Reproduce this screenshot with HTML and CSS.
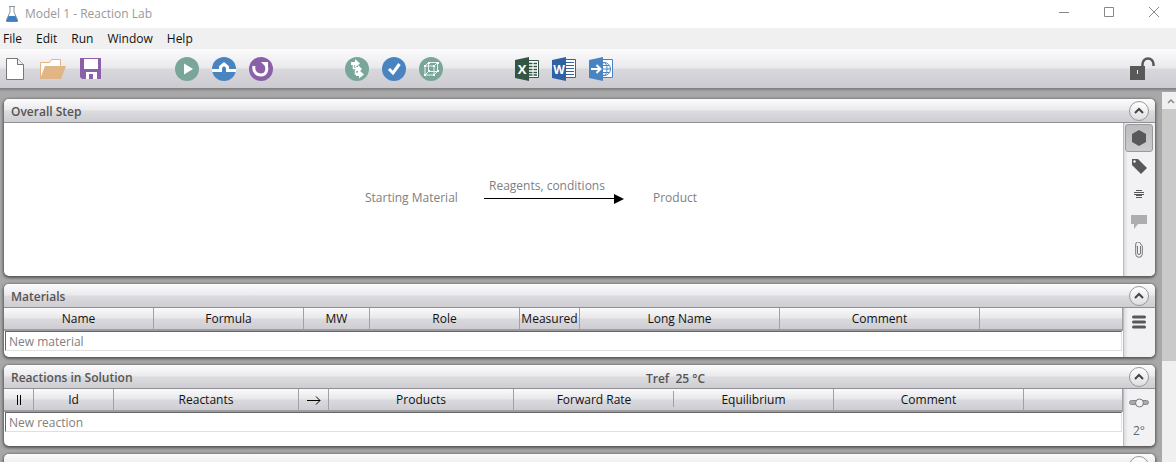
FILE: index.html
```
<!DOCTYPE html>
<html lang="en">
<head>
    <meta charset="UTF-8">
    <meta name="viewport" content="width=device-width, initial-scale=1.0">
    <title>Model 1 - Reaction Lab</title>
    <link rel="stylesheet" href="styles.css">
</head>
<body>

    <!-- Title bar -->
    <header class="title-bar">
        <svg class="app-icon" width="14" height="18" viewBox="0 0 14 18">
            <path d="M4 1.500h6M5 2v5L1.500 15v1.500h11V15L9 7V2" fill="#fff" stroke="#8b98a5"/>
            <path d="M3.500 11h7l2 4v1.500h-11V15z" fill="#3f7fc1"/>
        </svg>
        <h1>Model 1 - Reaction Lab</h1>
        <div class="window-buttons">
            <button aria-label="Minimize"><svg width="12" height="12" viewBox="0 0 12 12"><path d="M1 6.500h10"/></svg></button>
            <button aria-label="Maximize"><svg width="12" height="12" viewBox="0 0 12 12"><path d="M1.500 1.500h9v9h-9z"/></svg></button>
            <button aria-label="Close"><svg width="12" height="12" viewBox="0 0 12 12"><path d="M1 1l10 10M11 1L1 11"/></svg></button>
        </div>
    </header>

    <!-- Menu -->
    <nav class="menu">
        <button>File</button>
        <button>Edit</button>
        <button>Run</button>
        <button>Window</button>
        <button>Help</button>
    </nav>

    <!-- Toolbar -->
    <div class="toolbar">
        <div class="tool-group files">
            <button aria-label="New">
                <svg width="20" height="24" viewBox="0 0 20 24"><path d="M1.500 1.500h11l6 6v15h-17z" fill="#fff" stroke="#777"/><path d="M12.500 1.500v6h6" fill="#eee" stroke="#777"/></svg>
            </button>
            <button aria-label="Open">
                <svg width="28" height="22" viewBox="0 0 28 22"><path d="M1.500 20V4.500h9l2-3h9v6" fill="#fff" stroke="#e2b684"/><path d="M1 21L6 8h21l-5 13z" fill="#e2b684"/></svg>
            </button>
            <button aria-label="Save">
                <svg width="22" height="22" viewBox="0 0 22 22"><path d="M1 0h20v21H2l-2-2V0z" fill="#8a60a9"/><path d="M4 1h14v10H4zM6 14h11v7H6z" fill="#fff"/><path d="M9 16h4v5H9z" fill="#8a60a9"/></svg>
            </button>
        </div>
        <div class="tool-group">
            <button aria-label="Run">
                <svg width="24" height="24" viewBox="0 0 24 24"><circle cx="12" cy="12" r="12" fill="#7aa69a"/><path d="M9 6.500v11l9-5.500z" fill="#fff"/></svg>
            </button>
            <button aria-label="Bypass">
                <svg width="24" height="24" viewBox="0 0 24 24"><circle cx="12" cy="12" r="12" fill="#4a84c0"/><path d="M0 13.500h8.500V10L12 7l3.500 3v3.500H24" fill="none" stroke="#fff" stroke-width="3"/></svg>
            </button>
            <button aria-label="Repeat">
                <svg width="24" height="24" viewBox="0 0 24 24"><circle cx="12" cy="12" r="12" fill="#8a60a9"/><path d="M5 9c-1 5 2 9 7 9 5 0 7-5 5-10" fill="none" stroke="#fff" stroke-width="3"/><path d="M12 5h7v7z" fill="#fff"/></svg>
            </button>
        </div>
        <div class="tool-group">
            <button aria-label="Reactions">
                <svg width="24" height="24" viewBox="0 0 24 24"><circle cx="12" cy="12" r="12" fill="#7aa69a"/><path d="M6 5h4V2l5 4.500-5 4V8H6zM11 10h2V8l4 4-4 4v-2h-3zM14 15V13l5 4.500-5 4V19h-3v-3z" fill="#fff"/><path d="M8.500 8v3.500h3M10.500 13v4h4" fill="none" stroke="#fff" stroke-width="1.500"/></svg>
            </button>
            <button aria-label="Verify">
                <svg width="24" height="24" viewBox="0 0 24 24"><circle cx="12" cy="12" r="12" fill="#4a84c0"/><path d="M7 12l4 4 6.500-9" fill="none" stroke="#fff" stroke-width="3"/></svg>
            </button>
            <button aria-label="Design space">
                <svg width="24" height="24" viewBox="0 0 24 24"><circle cx="12" cy="12" r="12" fill="#7aa69a"/><path d="M6 9h9v9H6zM9.500 5.500h9v9h-9zM6 9l3.500-3.500M15 9l3.500-3.500M15 18l3.500-3.500M6 18l3.500-3.500" fill="none" stroke="#e8f1ee"/><path d="M5 8h2v2H5zM14 8h2v2h-2zM5 17h2v2H5zM14 17h2v2h-2zM9 5h2v2H9zM18 5h2v2h-2zM18 13h2v2h-2zM9 13h2v2H9z" fill="#fff"/></svg>
            </button>
        </div>
        <div class="tool-group">
            <button aria-label="Export to Excel">
                <svg width="24" height="24" viewBox="0 0 24 24"><path d="M13 3.500h10.500v17H13z" fill="#fff" stroke="#335544"/><path d="M14 6.500h8M14 9.500h8M14 12.500h8M14 15.500h8M14 18h8" stroke="#335544" stroke-width="1.500"/><path d="M18 5v14" stroke="#fff"/><path d="M0 3l14-3v24L0 21z" fill="#335544"/><text x="7" y="17" class="app-letter">X</text></svg>
            </button>
            <button aria-label="Export to Word">
                <svg width="24" height="24" viewBox="0 0 24 24"><path d="M13 2.500h10.500v18H13z" fill="#fff" stroke="#3260a5"/><path d="M14 5.500h8M14 8.500h8M14 11.500h8M14 14.500h8M14 17.500h8" stroke="#3260a5"/><path d="M0 3l14-3v24L0 21z" fill="#3260a5"/><text x="7" y="17" class="app-letter word">W</text></svg>
            </button>
            <button aria-label="Export to web">
                <svg width="24" height="24" viewBox="0 0 24 24"><path d="M13 2.500h10.500v18H13z" fill="#fff" stroke="#4a84c0"/><g fill="none" stroke="#4a84c0"><circle cx="15" cy="12" r="6.500"/><ellipse cx="15" cy="12" rx="3" ry="6.500"/><path d="M14 12h8M14 8.500h6M14 15.500h6"/></g><path d="M0 3l14-3v24L0 21z" fill="#4a84c0"/><path d="M2 12h9M7.500 8l4 4-4 4" fill="none" stroke="#fff" stroke-width="2"/></svg>
            </button>
        </div>
        <button class="lock" aria-label="Unlocked">
            <svg width="26" height="24" viewBox="0 0 26 24"><path d="M1 9h15v14H1z" fill="#585858"/><path d="M8.500 13v4" stroke="#eee"/><path d="M13.500 9V7a5.500 5.500 0 0 1 11 0v2" fill="none" stroke="#585858" stroke-width="2.500"/></svg>
        </button>
    </div>

    <div class="workspace">
        <main class="panels">

            <!-- Overall step -->
            <section class="panel">
                <div class="panel-header">
                    <h2>Overall Step</h2>
                    <button class="collapse" aria-label="Collapse Overall Step"><svg width="10" height="8" viewBox="0 0 10 8"><path d="M1 6l4-4 4 4"/></svg></button>
                </div>
                <div class="panel-body step-body">
                    <div class="panel-main scheme">
                        <span class="scheme-start">Starting Material</span>
                        <span class="scheme-arrow">
                            Reagents, conditions
                            <svg width="140" height="10" viewBox="0 0 140 10"><path d="M0 4.500h132" stroke="#000"/><path d="M130 0l10 5-10 5z"/></svg>
                        </span>
                        <span class="scheme-end">Product</span>
                    </div>
                    <div class="side">
                        <button class="selected" aria-label="Structure"><svg width="16" height="16" viewBox="0 0 16 16"><path d="M8 0l7 4v8l-7 4-7-4V4z" fill="#585858"/></svg></button>
                        <button aria-label="Label"><svg width="16" height="16" viewBox="0 0 16 16"><path d="M1 1h6l9 9-6 6-9-9z" fill="#585858"/><circle cx="3.500" cy="3.500" r="1.200" fill="#fff"/></svg></button>
                        <button aria-label="Text"><svg width="12" height="8" viewBox="0 0 12 8"><path d="M3 .5h6M1 2.500h10M3 5.500h6M1 4.500h10M3 7.500h6" stroke="#585858"/></svg></button>
                        <button aria-label="Comment"><svg width="16" height="14" viewBox="0 0 16 14"><path d="M0 0h16v9H7l-4 5V9H0z" fill="#adadad"/></svg></button>
                        <button aria-label="Attachment"><svg width="8" height="16" viewBox="0 0 8 16"><path d="M5.500 4v7a1.500 1.500 0 0 1-3 0V4M.7 5V3a2.500 2.500 0 0 1 5-1L7.300 4v8a3 3 0 0 1-6.600 0V4" fill="none" stroke="#777"/></svg></button>
                    </div>
                </div>
            </section>

            <!-- Materials -->
            <section class="panel">
                <div class="panel-header">
                    <h2>Materials</h2>
                    <button class="collapse" aria-label="Collapse Materials"><svg width="10" height="8" viewBox="0 0 10 8"><path d="M1 6l4-4 4 4"/></svg></button>
                </div>
                <div class="panel-body">
                    <div class="panel-main">
                        <table class="materials">
                            <thead>
                                <tr>
                                    <th class="name">Name</th>
                                    <th class="name">Formula</th>
                                    <th class="mw">MW</th>
                                    <th class="name">Role</th>
                                    <th class="measured">Measured</th>
                                    <th class="long">Long Name</th>
                                    <th class="long">Comment</th>
                                    <th></th>
                                </tr>
                            </thead>
                            <tbody>
                                <tr><td colspan="8"><input type="text" placeholder="New material" aria-label="New material"></td></tr>
                            </tbody>
                        </table>
                    </div>
                    <div class="side">
                        <button aria-label="Materials menu"><svg width="14" height="14" viewBox="0 0 14 14"><path d="M1.500 2h11M1.500 7h11M1.500 12h11" stroke="#585858" stroke-width="3" stroke-linecap="round"/></svg></button>
                    </div>
                </div>
            </section>

            <!-- Reactions -->
            <section class="panel">
                <div class="panel-header">
                    <h2>Reactions in Solution</h2>
                    <span class="tref">Tref&nbsp; 25 °C</span>
                    <button class="collapse" aria-label="Collapse Reactions in Solution"><svg width="10" height="8" viewBox="0 0 10 8"><path d="M1 6l4-4 4 4"/></svg></button>
                </div>
                <div class="panel-body reactions-body">
                    <div class="panel-main">
                        <table class="reactions">
                            <thead>
                                <tr>
                                    <th class="pause"><svg width="6" height="10" viewBox="0 0 6 10"><path d="M1.500 0v10M4.500 0v10" stroke="#000"/></svg></th>
                                    <th class="id">Id</th>
                                    <th class="side-name">Reactants</th>
                                    <th class="arrow"><svg width="14" height="10" viewBox="0 0 14 10"><path d="M0 5.500h13M9 1.500l4 4-4 4" fill="none" stroke="#000"/></svg></th>
                                    <th class="side-name">Products</th>
                                    <th class="rate split">Forward Rate</th>
                                    <th class="rate">Equilibrium</th>
                                    <th class="comment">Comment</th>
                                    <th></th>
                                </tr>
                            </thead>
                            <tbody>
                                <tr><td colspan="9"><input type="text" placeholder="New reaction" aria-label="New reaction"></td></tr>
                            </tbody>
                        </table>
                    </div>
                    <div class="side">
                        <button aria-label="Slider"><svg width="20" height="10" viewBox="0 0 20 10"><rect x=".5" y="2.500" width="19" height="4" rx="2" fill="#aaa" stroke="#888"/><circle cx="10.500" cy="5" r="4" fill="#f2f2f4" stroke="#777"/></svg></button>
                        <button>2°</button>
                    </div>
                </div>
            </section>

            <!-- Next panel, cut by the window -->
            <section class="panel">
                <div class="panel-header">
                    <button class="collapse" aria-label="Collapse"><svg width="10" height="8" viewBox="0 0 10 8"><path d="M1 6l4-4 4 4"/></svg></button>
                </div>
            </section>
        </main>

        <div class="scrollbar">
            <button aria-label="Scroll up"><svg width="8" height="6" viewBox="0 0 8 6"><path d="M1 5l3-3 3 3" fill="none" stroke="#888" stroke-width="1.500"/></svg></button>
            <div class="thumb"></div>
        </div>
    </div>

</body>
</html>
```

FILE: styles.css
```
* {
    margin: 0;
    padding: 0;
    box-sizing: border-box;
}

body {
    height: 100vh;
    display: flex;
    flex-direction: column;
    overflow: hidden;
    background: #a8a8a8;
    font-family: "Open Sans", "Noto Sans", sans-serif;
    font-size: 12px;
    line-height: 16px;
    color: #111;
}

button {
    display: flex;
    align-items: center;
    justify-content: center;
    background: none;
    border: none;
    font: inherit;
    color: inherit;
}

svg {
    display: block;
    flex: none;
}

/* Title bar */
.title-bar {
    flex: none;
    height: 28px;
    padding: 0 5px;
    display: flex;
    align-items: center;
    background: #fff;
}

.title-bar h1 {
    margin-left: 6px;
    font-size: 12px;
    font-weight: normal;
    color: #999;
}

.window-buttons {
    display: flex;
    margin-left: auto;
    margin-bottom: 4px;
}

.window-buttons button {
    width: 45px;
    height: 24px;
}

.window-buttons button:last-child {
    width: 34px;
    margin-left: 6px;
}

.window-buttons path {
    fill: none;
    stroke: #888;
}

/* Menu */
.menu {
    flex: none;
    height: 21px;
    padding: 0 3px;
    display: flex;
    gap: 14px;
    background: #f0f0f0;
}

/* Toolbar */
.toolbar {
    flex: none;
    height: 43px;
    padding: 0 21px 3px 3px;
    display: flex;
    align-items: center;
    gap: 72px;
    background: linear-gradient(#fcfcfd, #e9e9ec 19px, #d8d8dd 20px, #cbcbd1 39px, #838386 39px, #838386 40px, #989898 41px, #a8a8a8);
}

.tool-group {
    display: flex;
    gap: 13px;
}

.files {
    gap: 14px;
}

.toolbar button {
    width: 24px;
    height: 24px;
}

.toolbar .lock {
    margin-left: auto;
    width: 26px;
}

.app-letter {
    font-size: 13px;
    font-weight: bold;
    text-anchor: middle;
    fill: #fff;
}

.app-letter.word {
    font-size: 12px;
}

/* Workspace */
.workspace {
    flex: 1;
    min-height: 0;
    display: flex;
    justify-content: space-between;
}

.panels {
    flex: 1;
    min-width: 0;
    padding: 7px 7px 0 4px;
    display: flex;
    flex-direction: column;
    gap: 8px;
}

.panel {
    flex: none;
    background: #fff;
    border-radius: 5px;
    box-shadow: 0 1px 3px 1px #555;
}

.panel-header {
    position: relative;
    height: 24px;
    padding: 1px 6px 0 7px;
    display: flex;
    align-items: center;
    justify-content: space-between;
    border-bottom: 1px solid #8f8f95;
    border-radius: 5px 5px 0 0;
    background: linear-gradient(#fcfcfd, #eaeaed 11px, #dcdce0 12px, #cdcdd2);
}

.panel-header h2,
.tref {
    padding-top: 1px;
    font-size: 12px;
    font-weight: 600;
    color: #555;
}

.tref {
    position: absolute;
    left: 642px;
    top: 5px;
}

.collapse {
    width: 20px;
    height: 20px;
    margin-left: auto;
    border: 1px solid #999;
    border-radius: 50%;
    background: linear-gradient(#fff, #dedee2);
}

.collapse path {
    fill: none;
    stroke: #444;
    stroke-width: 2;
}

.panel-body {
    display: flex;
    min-height: 49px;
}

.panel-main {
    flex: 1;
    min-width: 0;
}

.side {
    width: 32px;
    padding: 0 2px 0 1px;
    display: flex;
    flex-direction: column;
    border-left: 1px solid #bbb;
    border-bottom-right-radius: 5px;
    background: linear-gradient(to right, #dcdce0, #f2f2f4 4px);
    color: #666;
}

.side button {
    width: 28px;
    height: 28px;
}

.side .selected {
    border: 1px solid #999;
    border-radius: 3px;
    background: linear-gradient(#bdbdbf, #cbcbcd);
}

/* Reaction scheme */
.step-body {
    min-height: 153px;
}

.step-body .side,
.materials-body .side {
    padding-top: 1px;
}

.scheme {
    padding: 0 0 3px 361px;
    display: flex;
    align-items: center;
    color: #808080;
}

.scheme-start {
    width: 119px;
}

.scheme-arrow {
    width: 140px;
    margin-right: 29px;
    padding: 0 0 14px 5px;
}

.scheme-arrow svg {
    margin-left: -5px;
}

/* Tables */
table {
    width: 100%;
    table-layout: fixed;
    border-collapse: separate;
    border-spacing: 0;
}

th {
    height: 23px;
    border-right: 1px solid #a0a0a5;
    border-bottom: 2px solid #9c9ca2;
    background: linear-gradient(#fafafb, #e8e8eb 10px, #dadade 11px, #cdcdd2);
    font-weight: normal;
}

th svg {
    margin: 0 auto;
}

.name {
    width: 150px;
}

.mw {
    width: 66px;
}

.measured {
    width: 60px;
}

.long {
    width: 200px;
}

.pause,
.arrow {
    width: 30px;
}

.id {
    width: 80px;
}

.side-name {
    width: 185px;
}

.rate {
    width: 160px;
}

.split {
    border-right: none;
    background:
        linear-gradient(#a0a0a5, #a0a0a5) right 2px / 1px 16px no-repeat,
        linear-gradient(#fafafb, #e8e8eb 10px, #dadade 11px, #cdcdd2);
}

.comment {
    width: 190px;
}

td {
    padding: 0 1px;
}

input {
    display: block;
    width: 100%;
    height: 20px;
    padding: 0 3px;
    border: 1px solid #e0e0e0;
    border-top-color: #666;
    border-left-color: #666;
    outline: none;
    font: inherit;
}

input::placeholder {
    color: #808080;
}

.reactions-body {
    min-height: 57px;
}

/* Scrollbar */
.scrollbar {
    width: 14px;
    background: #f0f0f0;
}

.scrollbar button {
    width: 14px;
    height: 17px;
    padding-left: 4px;
}

.thumb {
    height: 252px;
    background: #cacaca;
}
```
